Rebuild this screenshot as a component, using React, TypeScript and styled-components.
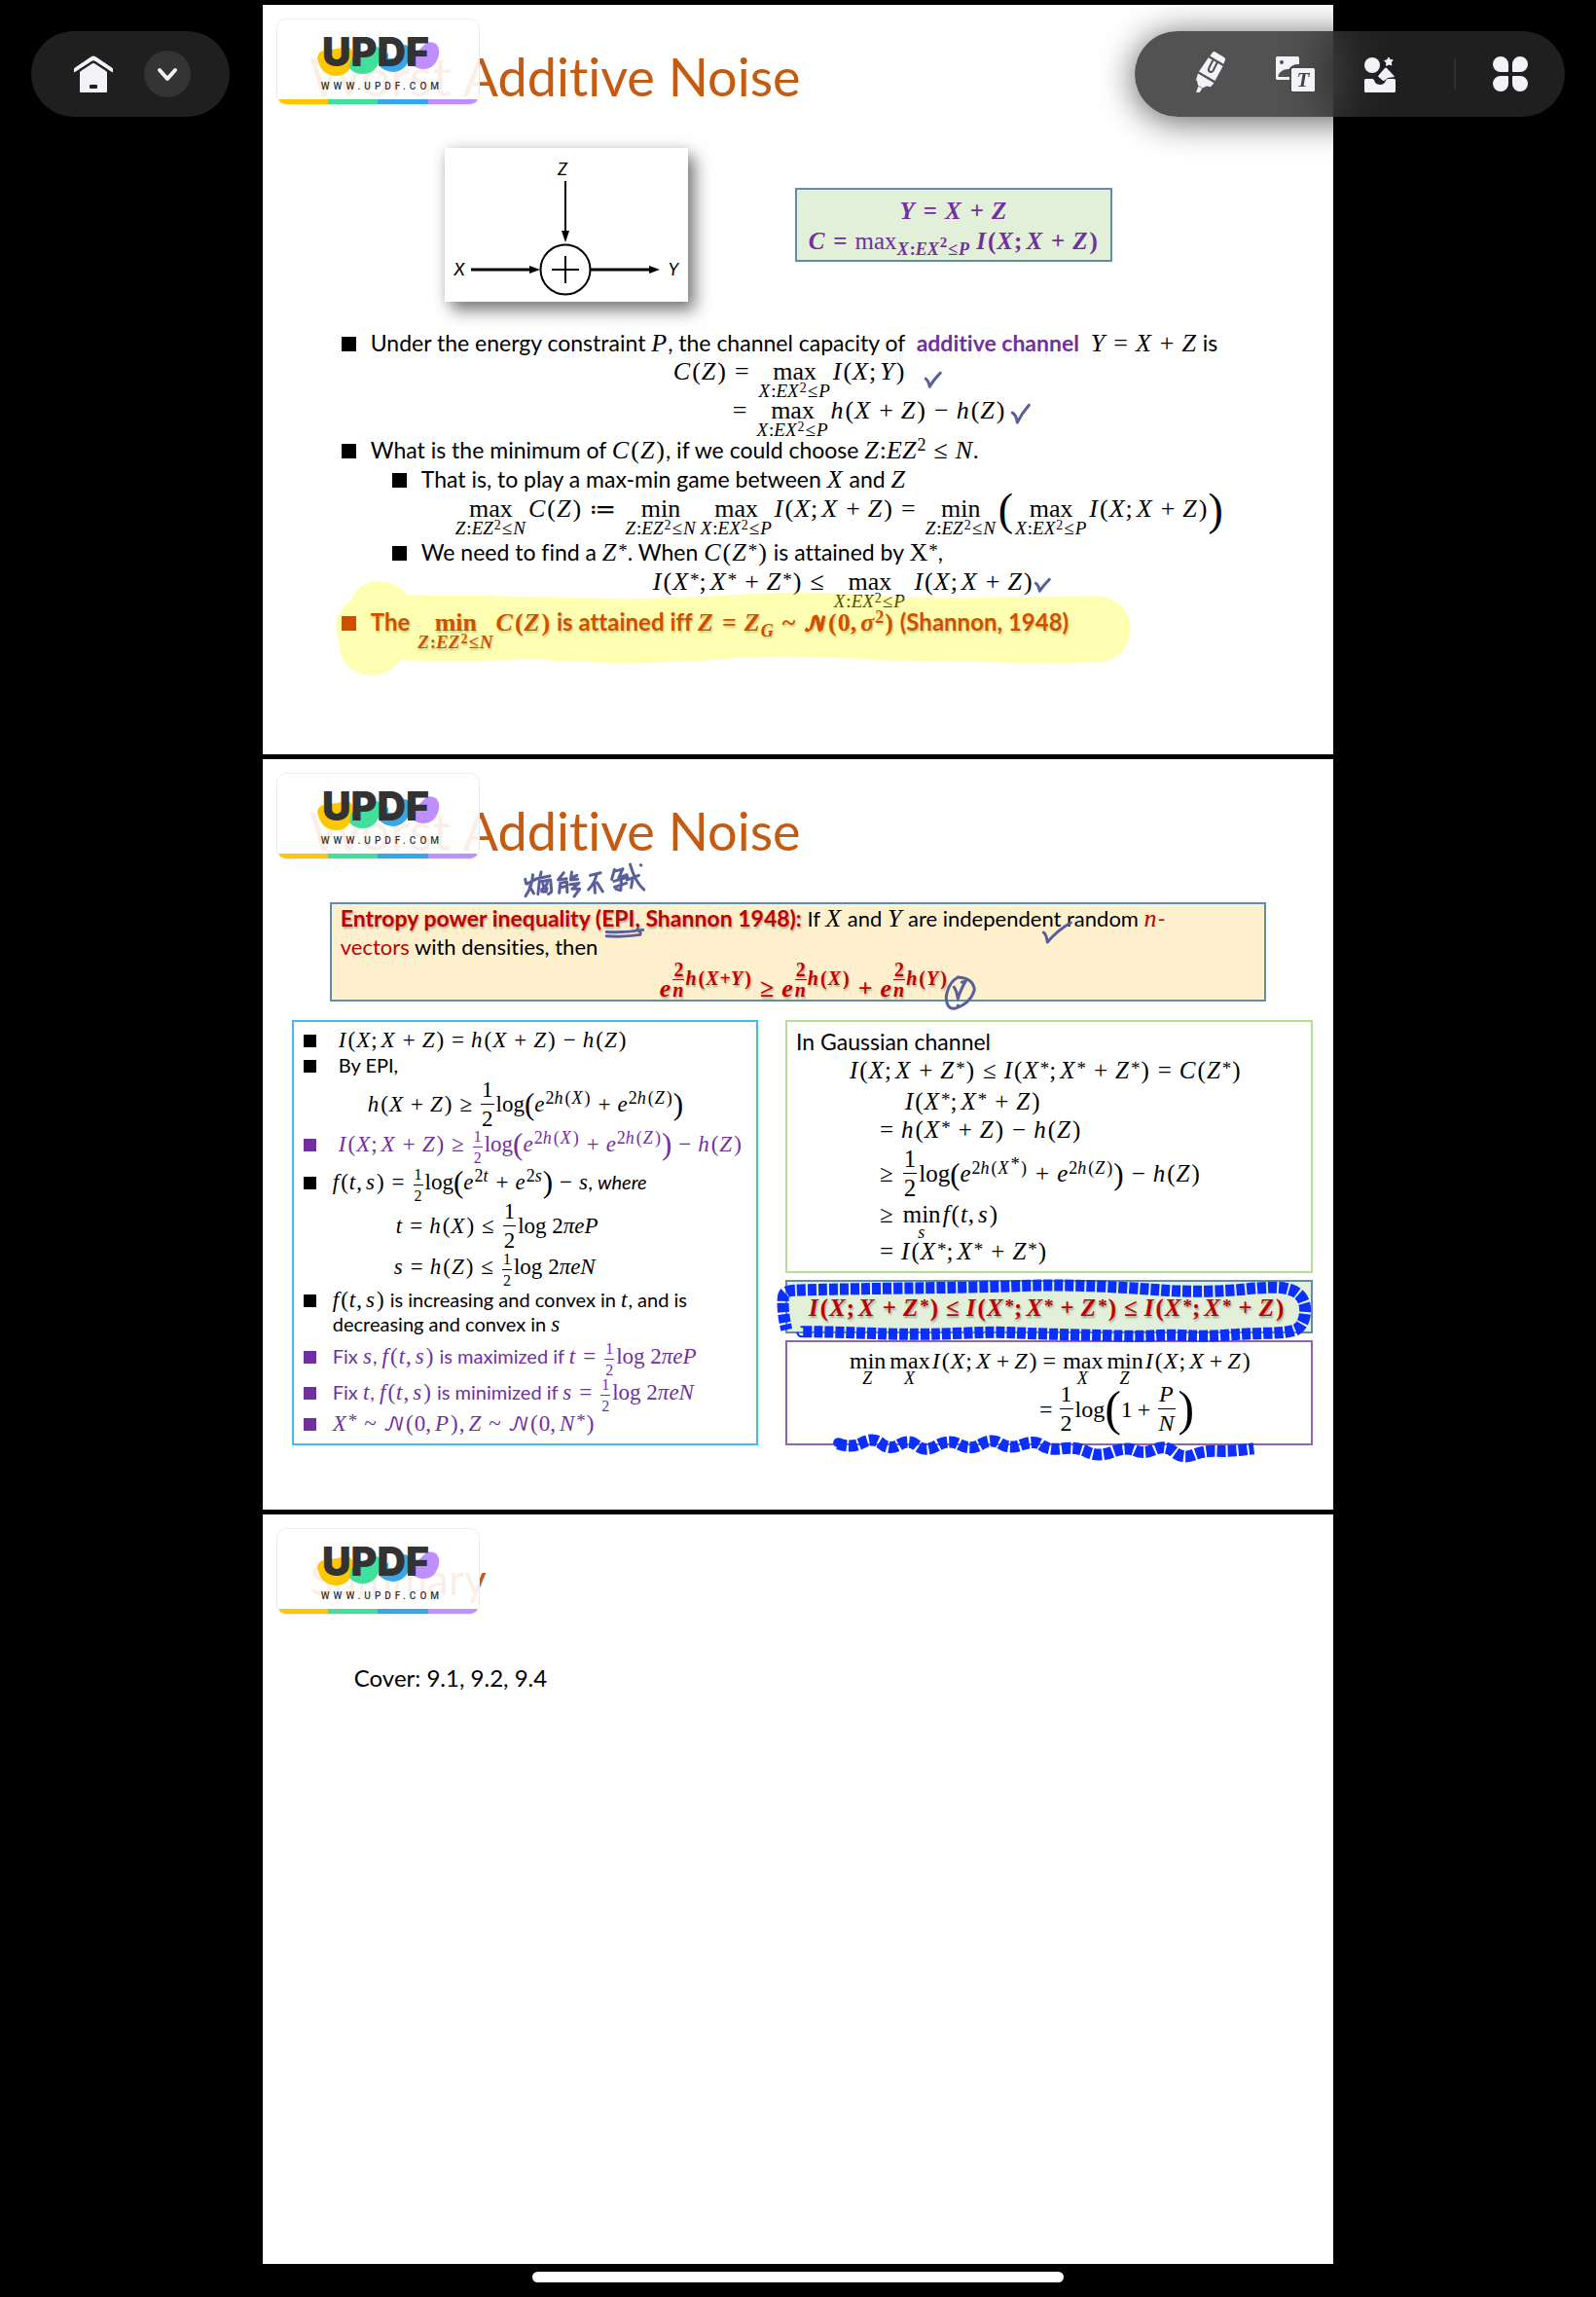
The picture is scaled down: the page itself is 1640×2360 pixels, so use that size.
import React from 'react';
import styled, { createGlobalStyle, css } from 'styled-components';

const INK = '#595f9b';
const PURPLE = '#7030a0';
const RED = '#c00000';
const ICON = '#f2f2f8';

const GlobalStyle = createGlobalStyle`
  *, *::before, *::after { box-sizing: border-box; }
  body {
    margin: 0;
    background: #000;
    color: #000;
    font-family: Lato, 'Open Sans', sans-serif;
    font-variant-ligatures: none;
  }
`;

const Viewer = styled.div`
  position: relative;
  min-height: 100vh;
  background: #000;
  display: flex;
  flex-direction: column;
  align-items: center;
  padding-top: 5px;
`;

const Pages = styled.main`
  width: 67.1%;
  display: flex;
  flex-direction: column;
  gap: 5px;
`;

const Slide = styled.section`
  position: relative;
  background: #fff;
  aspect-ratio: 10 / 7;
  overflow: hidden;
`;

const Title = styled.h1<{ $small?: boolean }>`
  margin: 0;
  padding: ${(p) => (p.$small ? '34px 0 7px 49px' : '42px 0 0 48px')};
  font-size: ${(p) => (p.$small ? 44 : 54)}px;
  line-height: 64px;
  font-weight: 400;
  color: #c55a11;
  white-space: nowrap;
`;

const HomeBar = styled.div`
  width: 33.3%;
  height: 11px;
  border-radius: 6px;
  background: #fff;
  margin-top: 8px;
`;

/* ---------- floating toolbars ---------- */

const TopBar = styled.header`
  position: absolute;
  top: 0;
  left: 0;
  right: 0;
  padding: 32px;
  display: flex;
  justify-content: space-between;
  pointer-events: none;
`;

const Pill = styled.nav<{ $pad: string; $gap: number }>`
  display: flex;
  align-items: center;
  gap: ${(p) => p.$gap}px;
  height: 88px;
  padding: ${(p) => p.$pad};
  border-radius: 44px;
  background: rgba(39, 39, 39, 0.8);
  backdrop-filter: blur(30px);
  box-shadow: 0 4px 36px rgba(0, 0, 0, 0.65);
  pointer-events: auto;
`;

const IconButton = styled.button<{ $round?: boolean }>`
  width: 48px;
  height: 48px;
  padding: 0;
  border: 0;
  border-radius: 24px;
  background: ${(p) => (p.$round ? '#343434' : 'transparent')};
  color: ${ICON};
  svg { display: block; width: 48px; height: 48px; }
`;

const Divider = styled.span`
  width: 2px;
  height: 32px;
  margin: 0 -7px 0 13px;
  background: #2f2f2f;
`;

const HomeIcon = () => (
  <svg viewBox="0 0 48 48" fill="currentColor" aria-hidden="true">
    <path d="M22 6.1q2-1.4 4 0l17 11.3q1 .7 1 1.8v2.4q0 1.2-1 .5L26 10.9q-2-1.3-4 0L5 22.1q-1 .7-1-.5v-2.4q0-1.1 1-1.8z" />
    <path fillRule="evenodd" d="M22.8 13.2q1.2-.8 2.4 0L37 21q1 .7 1 1.8V42q0 1-1 1H11q-1 0-1-1V22.8q0-1.1 1-1.8zM21 35q-1 0-1 1v2q0 1 1 1h6q1 0 1-1v-2q0-1-1-1z" />
  </svg>
);

const ChevronIcon = () => (
  <svg viewBox="0 0 48 48" fill="none" stroke="currentColor" strokeWidth="4" strokeLinecap="round" strokeLinejoin="round" aria-hidden="true">
    <path d="M16 20l8 9 8-9" />
  </svg>
);

const MarkerIcon = () => (
  <svg viewBox="0 0 48 48" fill="currentColor" aria-hidden="true">
    <path d="M26.5 1.3q.8-.8 2 0l9.5 5.7q1.6 1 .9 2.8l-1.5 4L23.300 5.400z" />
    <path d="M21.700 7.200l14.900 8.900L28.500 31 12 21.400z" />
    <path d="M26 10.500l-4 8q-.6 2.400 1.300 3.300 2 .8 3.200-1l4-8" fill="none" stroke="#505050" strokeWidth="2" strokeLinecap="round" />
    <path d="M11 23.500l16.500 9.700-3.500 4-4-.7-4.500 2-4.500-3-.8-4-1.200-1.500z" />
    <path d="M11.500 36.500l3.800 2.400-2.800 4-3.500-.2z" />
  </svg>
);

const ImageTextIcon = () => (
  <svg viewBox="0 0 48 48" fill="currentColor" aria-hidden="true">
    <path d="M5.500 6h21q1.500 0 1.500 1.500V14q-7-.6-10.500 5-8-.6-11 6.500-.6 1.500.8 1.500H18v3H5.500Q4 30 4 28.500v-21Q4 6 5.500 6z" />
    <circle cx="10" cy="12" r="2" fill="#505050" />
    <rect x="18.500" y="16.500" width="27" height="27" rx="2" fill="#474747" />
    <rect x="20" y="18" width="24" height="24" rx="1.500" />
    <text x="32" y="37" fontSize="21" fontWeight="700" fontStyle="italic" fontFamily="'Liberation Serif', serif" textAnchor="middle" fill="#454545">T</text>
  </svg>
);

const ShapesIcon = () => (
  <svg viewBox="0 0 48 48" fill="currentColor" aria-hidden="true">
    <circle cx="16" cy="15" r="8" />
    <path d="M33 7l1.300 2.500 2.900.300-1.900 2.300.6 2.900-2.700-1-2.600 1.400.2-3-2.200-2 2.900-.7z" strokeWidth="1" stroke="currentColor" strokeLinejoin="round" />
    <path d="M29 18q1-1.200 2 0l7.500 8q.8 1.200-.5 1.200-5 0-7 1.500l-2.500 2q-1 .8-1.600 0L22.500 27q-.7-.8 0-1.500z" />
    <path d="M9.500 29H16q1.600 0 2 1.400 1.500 4.600 6.200 4.600 4 0 6-4.600.6-1.400 2-1.400h6.300q1.500 0 1.500 1.500v11q0 1.500-1.500 1.500h-29Q8 43 8 41.500v-11Q8 29 9.500 29z" />
  </svg>
);

const CloverIcon = () => (
  <svg viewBox="0 0 48 48" fill="currentColor" aria-hidden="true">
    <path d="M14 6a8 8 0 0 1 8 8v7q0 1-1 1h-7a8 8 0 0 1 0-16zM34 6a8 8 0 0 1 0 16h-7q-1 0-1-1v-7a8 8 0 0 1 8-8zM14 26h7q1 0 1 1v7a8 8 0 1 1-8-8zM27 26h7a8 8 0 1 1-8 8v-7q0-1 1-1z" />
  </svg>
);

/* ---------- watermark card ---------- */

const Mark = styled.aside`
  position: absolute;
  top: 14px;
  left: 14px;
  width: 209px;
  height: 89px;
  display: flex;
  flex-direction: column;
  border: 1px solid #ececec;
  border-radius: 10px;
  background: rgba(255, 255, 255, 0.9);
  overflow: hidden;
  svg { display: block; width: 207px; height: 62px; }
`;

const MarkUrl = styled.span`
  flex: 1;
  padding-left: 45px;
  font: 500 10px/14px Roboto, sans-serif;
  letter-spacing: 4px;
  color: #333;
`;

const MarkBar = styled.span`
  height: 5px;
  background: linear-gradient(90deg, #ffc700 25%, #40e09c 25% 50%, #38a6ea 50% 75%, #bf8fff 75%);
`;

const Watermark = () => (
  <Mark>
    <svg viewBox="0 0 207 62">
      <path d="M41 39q2-8 9-7l22-4q7 2 6 12-3 18-18 18-16-1-19-19z" fill="#ffc700" />
      <path d="M76 40l22-12q9-2 8 9-3 19-18 19-9 0-14-6z" fill="#40e09c" />
      <path d="M105 40l23-14q9-1 9 8-2 18-17 20-10 0-16-7z" fill="#38a6ea" />
      <path d="M137 40l14-14q5-5 12-1 4 4 3 11-3 14-15 15-8 0-14-5z" fill="#bf8fff" />
      <path d="M83 28h8q5 4 0 9h-8zM114 27h6q8 5 0 13h-6z" fill="#fff" />
      <text x="101" y="48" textAnchor="middle" fontFamily="Inter, sans-serif" fontWeight="900" fontSize="41" fill="#333">UPDF</text>
    </svg>
    <MarkUrl>WWW.UPDF.COM</MarkUrl>
    <MarkBar />
  </Mark>
);

/* ---------- mathematics ---------- */

const Op = styled.span`margin: 0 var(--op);`;
const Punct = styled.span`margin-right: 4px;`;
const Paren = styled.span`margin: 0 1px;`;
const Plain = styled.span`font-weight: 400;`;
const Star = styled.span`
  font-size: 19px;
  line-height: 0;
  vertical-align: 4px;
  margin-left: 1px;
`;
const Big = styled.span<{ $size: number }>`
  font-size: ${(p) => p.$size}px;
  line-height: 0;
  font-weight: 400;
  vertical-align: ${(p) => (p.$size > 40 ? -8 : -3)}px;
`;

const Formula = styled.span<{ $bold?: boolean }>`
  font-family: 'Liberation Serif', 'DejaVu Math TeX Gyre', serif;
  font-size: var(--math);
  font-weight: ${(p) => (p.$bold ? 700 : 400)};
  i { margin-right: 1px; }
`;

const Script = styled.span`
  font-family: 'DejaVu Math TeX Gyre', 'DejaVu Sans', serif;
  font-size: 20px;
  line-height: 0;
  font-weight: 400;
`;

const Sup = styled.span`
  font-size: 18px;
  line-height: 0;
  vertical-align: 8px;
  ${Op} { margin: 0; }
`;

const Sub = styled.span`
  font-size: 18px;
  line-height: 0;
  vertical-align: -6px;
  ${Op} { margin: 0 1px; }
  ${Sup} { font-size: 15px; }
`;

const UnderBox = styled.span<{ $wide?: boolean }>`
  display: inline-flex;
  flex-direction: column;
  align-items: center;
  margin: 0 2px -30px;
  > span:last-child {
    margin-top: ${(p) => (p.$wide ? -2 : -4)}px;
    font-size: ${(p) => (p.$wide ? 19 : 18)}px;
    line-height: 16px;
  }
  > span:last-child ${Op} { margin: 0 1px; }
  ${Sup} { font-size: 14px; vertical-align: 5px; }
`;

const FracBox = styled.span<{ $small?: boolean }>`
  display: inline-flex;
  flex-direction: column;
  align-items: center;
  vertical-align: middle;
  margin: ${(p) => (p.$small ? '-40px 2px' : '-43px 2px -37px')};
  ${(p) => p.$small && css`font-size: 16px;`}
  > span { line-height: ${(p) => (p.$small ? 21 : 29)}px; padding: 0 1px; }
  > span:first-child { border-bottom: 1px solid currentColor; }
`;

const PowerBox = styled.span`
  display: inline-block;
  font-size: 20px;
  line-height: 0;
  vertical-align: 12px;
  ${Op} { margin: 0; }
  ${FracBox} { margin: -31px 0 -29px; }
  ${FracBox} > span { line-height: 20px; }
`;

function parse(text: string): React.ReactNode[] {
  const runs = text.match(/[A-Za-zπσ]+|[0-9]+|\s+|./gu) ?? [];
  return runs.map((run, i) => {
    if (/^[A-Za-zπσ]/.test(run)) return <i key={i}>{run}</i>;
    if (/^[+=−≤≥~≔]$/.test(run)) return <Op key={i}>{run}</Op>;
    if (/^[;,]$/.test(run)) return <Punct key={i}>{run}</Punct>;
    if (/^[()]$/.test(run)) return <Paren key={i}>{run}</Paren>;
    if (run === '*') return <Star key={i}>*</Star>;
    return run;
  });
}

const mathify = (children: React.ReactNode) =>
  React.Children.map(children, (c) => (typeof c === 'string' ? parse(c) : c));

const M = ({ children, bold }: { children: React.ReactNode; bold?: boolean }) => (
  <Formula $bold={bold}>{mathify(children)}</Formula>
);
const Up = ({ children }: { children: React.ReactNode }) => <Sup>{mathify(children)}</Sup>;
const Under = ({ fn, children, wide }: { fn: string; children: React.ReactNode; wide?: boolean }) => (
  <UnderBox $wide={wide}>
    <span>{fn}</span>
    <span>{mathify(children)}</span>
  </UnderBox>
);
const Frac = ({ n, d, small }: { n: string; d: string; small?: boolean }) => (
  <FracBox $small={small}>
    <span>{parse(n)}</span>
    <span>{parse(d)}</span>
  </FracBox>
);
const LimX = ({ fn = 'max' }: { fn?: string }) => (
  <Under fn={fn} wide>{'X:EX'}<Up>2</Up>{'≤P'}</Under>
);
const LimZ = ({ fn }: { fn: string }) => (
  <Under fn={fn} wide>{'Z:EZ'}<Up>2</Up>{'≤N'}</Under>
);
const LogSum = ({ a, b }: { a: string; b: string }) => (
  <>
    {'log'}
    <Big $size={31}>(</Big>
    {parse('e')}
    <Up>{a}</Up>
    {parse('+e')}
    <Up>{b}</Up>
    <Big $size={31}>)</Big>
  </>
);
const EpiPower = ({ arg }: { arg: string }) => (
  <>
    {parse('e')}
    <PowerBox><Frac n="2" d="n" />{parse(arg)}</PowerBox>
  </>
);

/* ---------- slide text ---------- */

const Lines = styled.div<{ $text: number; $math: number; $lh: number; $op?: number }>`
  --math: ${(p) => p.$math}px;
  --op: ${(p) => p.$op ?? 7}px;
  font-size: ${(p) => p.$text}px;
  line-height: ${(p) => p.$lh}px;
`;

const Line = styled.div<{ $h: number; $in?: number; $gap?: number; $color?: string; $strong?: boolean }>`
  display: flex;
  align-items: baseline;
  gap: ${(p) => p.$gap ?? 0}px;
  height: ${(p) => p.$h}px;
  padding-left: ${(p) => p.$in ?? 0}px;
  white-space: pre;
  color: ${(p) => p.$color ?? 'inherit'};
  ${(p) => p.$strong && css`
    font-size: 24px;
    font-weight: 700;
    text-shadow: 1px 2px 2px rgba(0, 0, 0, 0.3);
  `}
`;

const Dot = styled.span<{ $size: number }>`
  flex: none;
  width: ${(p) => p.$size}px;
  height: ${(p) => p.$size}px;
  margin-bottom: 3px;
  background: currentColor;
`;

const Accent = styled.span<{ $c: string }>`color: ${(p) => p.$c};`;
const Strong = styled.strong<{ $c: string; $size?: number; $shadow?: boolean }>`
  color: ${(p) => p.$c};
  font-size: ${(p) => p.$size ?? 24}px;
  font-weight: 700;
  ${(p) => p.$shadow && css`text-shadow: 1px 2px 2px rgba(0, 0, 0, 0.3);`}
`;

const Figures = styled.div`
  display: flex;
  align-items: center;
  gap: 110px;
  margin: 41px 0 28px 187px;
`;

const DiagramCard = styled.figure`
  margin: 0;
  width: 250px;
  height: 158px;
  background: #fff;
  box-shadow: 7px 9px 16px rgba(0, 0, 0, 0.5), 0 0 12px rgba(0, 0, 0, 0.12);
  svg { display: block; width: 100%; height: 100%; }
`;

const CapacityBox = styled.div`
  --math: 25px;
  --op: 8px;
  width: 326px;
  padding: 6px 0 4px;
  border: 2px solid #5f8db0;
  background: #e2efd9;
  color: ${PURPLE};
  text-align: center;
  font: 25px/31px 'Liberation Serif', serif;
  white-space: nowrap;
`;

const Bullets = styled(Lines)`padding-left: 81px;`;

const EpiBox = styled(Lines)`
  margin: 41px 69px 19px;
  padding: 0 9px;
  height: 102px;
  border: 2px solid #5f8db0;
  background: #fff0cd;
`;

const Columns = styled.div`
  display: grid;
  grid-template-columns: 479fr 542fr;
  gap: 28px;
  margin: 0 21px 0 30px;
`;

const Stack = styled.div`
  display: flex;
  flex-direction: column;
  gap: 7px;
`;

const Panel = styled(Lines)<{ $border: string; $fill?: string; $pad: string }>`
  border: 2px solid ${(p) => p.$border};
  background: ${(p) => p.$fill ?? 'transparent'};
  padding: ${(p) => p.$pad};
`;

const Cover = styled.p`
  margin: 49px 0 0 94px;
  font-size: 24px;
  line-height: 28px;
`;

const Ink = styled.svg`
  position: absolute;
  inset: 0;
  width: 100%;
  height: 100%;
  pointer-events: none;
`;

/* Runs one soft curve through the midpoints of a pen stroke's points. */
function smooth(pts: number[][]): string {
  let d = `M${pts[0][0]} ${pts[0][1]}`;
  for (let i = 1; i < pts.length - 1; i++) {
    const mx = (pts[i][0] + pts[i + 1][0]) / 2;
    const my = (pts[i][1] + pts[i + 1][1]) / 2;
    d += `Q${pts[i][0]} ${pts[i][1]} ${mx} ${my}`;
  }
  const last = pts[pts.length - 1];
  return `${d}L${last[0]} ${last[1]}`;
}

const LOOP = smooth([
  [555, 588], [582, 588], [629, 590], [684, 591], [753, 588], [789, 590], [833, 591], [902, 593], [931, 591],
  [967, 593], [1011, 590], [1056, 589], [1068, 582], [1072, 563], [1065, 548], [1047, 542], [1022, 543], [993, 546],
  [949, 547], [905, 544], [858, 541], [804, 540], [745, 542], [684, 543], [611, 544], [556, 545], [536, 546],
  [534, 555], [535, 572], [538, 586],
]);

const WAVE = smooth([
  [591, 703], [605, 708], [627, 696], [644, 710], [664, 698], [680, 712], [705, 698], [727, 710], [749, 697],
  [767, 709], [793, 699], [807, 710], [836, 706], [858, 717], [887, 706], [905, 714], [927, 704], [945, 719],
  [967, 710], [993, 711], [1018, 708],
]);

const Diagram = () => (
  <svg viewBox="0 0 250 158" fill="none" stroke="#000" strokeWidth="2">
    <path d="M124 34v54" />
    <path d="M27 125h62M150 125h60" strokeWidth="3" />
    <circle cx="124" cy="125" r="25.500" />
    <path d="M110 125h28M124 111v28" />
    <path d="M120 85h8l-4 12zM87 121l11 4-11 4zM210 121l11 4-11 4z" fill="#000" stroke="none" />
    <g fill="#000" stroke="none" fontFamily="Lato, sans-serif" fontStyle="italic" fontSize="18" textAnchor="middle">
      <text x="121" y="28">Z</text>
      <text x="15" y="131">X</text>
      <text x="235" y="131">Y</text>
    </g>
  </svg>
);

const SlideOne = () => (
  <Slide>
    <Title>Worst Additive Noise</Title>
    <Figures>
      <DiagramCard><Diagram /></DiagramCard>
      <CapacityBox>
        <div><M bold>Y=X+Z</M></div>
        <div>
          <M bold>
            {'C='}
            <Plain>max</Plain>
            <Sub>{parse('X:EX')}<Up>2</Up>{parse('≤P')}</Sub>
            {' I(X;X+Z)'}
          </M>
        </div>
      </CapacityBox>
    </Figures>
    <Bullets $text={23} $math={26} $lh={28} $op={8}>
      <Line $h={30} $gap={15}>
        <Dot $size={15} />
        <span>Under the energy constraint <M>P</M>, the channel capacity of  <Strong $c={PURPLE} $size={23}>additive channel</Strong>  <M>Y=X+Z</M> is</span>
      </Line>
      <Line $h={40} $in={341}><M>{'C(Z)='}<LimX />{'I(X;Y)'}</M></Line>
      <Line $h={40} $in={394}><M>{'='}<LimX />{'h(X+Z)−h(Z)'}</M></Line>
      <Line $h={30} $gap={15}>
        <Dot $size={15} />
        <span>What is the minimum of <M>C(Z)</M>, if we could choose <M>{'Z:EZ'}<Up>2</Up>{'≤N'}</M>.</span>
      </Line>
      <Line $h={31} $in={52} $gap={15}>
        <Dot $size={15} />
        <span>That is, to play a max-min game between <M>X</M> and <M>Z</M></span>
      </Line>
      <Line $h={44} $in={115}>
        <M>
          <LimZ fn="max" />{'C(Z)≔'}<LimZ fn="min" /><LimX />{'I(X;X+Z)='}<LimZ fn="min" />
          <Big $size={46}>(</Big><LimX />{'I(X;X+Z)'}<Big $size={46}>)</Big>
        </M>
      </Line>
      <Line $h={31} $in={52} $gap={15}>
        <Dot $size={15} />
        <span>We need to find a <M>Z*</M>. When <M>C(Z*)</M> is attained by <M><span>X</span>*</M>,</span>
      </Line>
      <Line $h={41} $in={320}><M>{'I(X*;X*+Z*)≤'}<LimX />{' I(X;X+Z)'}</M></Line>
      <Line $h={40} $gap={15} $color={RED} $strong>
        <Dot $size={15} />
        <span>
          The <M bold><LimZ fn="min" />{'C(Z)'}</M> is attained iff <M bold>{'Z=Z'}<Sub>{parse('G')}</Sub>{'~'}<Script>𝓝</Script>{'(0,σ'}<Up>2</Up>{')'}</M> (Shannon, 1948)
        </span>
      </Line>
    </Bullets>
    <Ink viewBox="0 0 1100 770">
      <path
        d="M148 606L240 607Q320 609 370 610 430 609 480 606 540 602 590 604 650 609 720 609L857 607Q891 611 891 641 890 670 860 675 800 677 740 675L640 673Q560 668 500 670 420 676 370 676 320 675 280 672 200 675 141 673 130 688 112 689 92 688 83 673 78 664 78 652 74 640 76 632 80 618 90 612 98 592 120 592 140 593 148 606z"
        fill="#ff0" fillOpacity="0.3"
      />
      <g fill="none" stroke={INK} strokeWidth="3" strokeLinecap="round" strokeLinejoin="round">
        <path d="M681 384q3 2 4 8 5-8 11-14" />
        <path d="M770 419q4 2 5 10 5-10 12-18" />
        <path d="M794 594q3 2 4 8 5-7 10-12" />
      </g>
    </Ink>
    <Watermark />
  </Slide>
);

const SlideTwo = () => (
  <Slide>
    <Title>Worst Additive Noise</Title>
    <EpiBox $text={22} $math={26} $lh={28} $op={8}>
      <Line $h={30}>
        <span>
          <Strong $c={RED} $size={23} $shadow>Entropy power inequality (EPI, Shannon 1948):</Strong> If <M>X</M> and <M>Y</M> are independent random <Accent $c={RED}><M>n</M>-</Accent>
        </span>
      </Line>
      <Line $h={43}><span><Accent $c={RED}>vectors</Accent> with densities, then</span></Line>
      <Line $h={24} $in={328} $color={RED} $strong>
        <M bold><EpiPower arg="h(X+Y)" />{'≥'}<EpiPower arg="h(X)" />{'+'}<EpiPower arg="h(Y)" /></M>
      </Line>
    </EpiBox>
    <Columns>
      <Panel $text={20} $math={23} $lh={24} $border="#3dbdf0" $pad="7px 0 0 10px">
        <Line $h={25} $gap={23}><Dot $size={13} /><M>I(X;X+Z)=h(X+Z)−h(Z)</M></Line>
        <Line $h={41} $gap={23}><Dot $size={13} /><span>By EPI,</span></Line>
        <Line $h={41} $in={66}><M>{'h(X+Z)≥'}<Frac n="1" d="2" /><LogSum a="2h(X)" b="2h(Z)" /></M></Line>
        <Line $h={38} $gap={23} $color={PURPLE}>
          <Dot $size={13} />
          <M>{'I(X;X+Z)≥'}<Frac small n="1" d="2" /><LogSum a="2h(X)" b="2h(Z)" />{'−h(Z)'}</M>
        </Line>
        <Line $h={46} $gap={17}>
          <Dot $size={13} />
          <span><M>{'f(t,s)='}<Frac small n="1" d="2" /><LogSum a="2t" b="2s" />{'−s'}</M><em>, where</em></span>
        </Line>
        <Line $h={42} $in={95}><M>{'t=h(X)≤'}<Frac n="1" d="2" /><span>log </span>{'2πeP'}</M></Line>
        <Line $h={33} $in={93}><M>{'s=h(Z)≤'}<Frac small n="1" d="2" /><span>log </span>{'2πeN'}</M></Line>
        <Line $h={58} $gap={17}>
          <Dot $size={13} />
          <span><M>f(t,s)</M> is increasing and convex in <M>t</M>, and is{'\n'}decreasing and convex in <M>s</M></span>
        </Line>
        <Line $h={37} $gap={17} $color={PURPLE}>
          <Dot $size={13} />
          <span>Fix <M>s</M>, <M>f(t,s)</M> is maximized if <M>{'t='}<Frac small n="1" d="2" /><span>log </span>{'2πeP'}</M></span>
        </Line>
        <Line $h={33} $gap={17} $color={PURPLE}>
          <Dot $size={13} />
          <span>Fix <M>t</M>, <M>f(t,s)</M> is minimized if <M>{'s='}<Frac small n="1" d="2" /><span>log </span>{'2πeN'}</M></span>
        </Line>
        <Line $h={24} $gap={17} $color={PURPLE}>
          <Dot $size={13} />
          <M>{'X*~'}<Script>𝒩</Script>{'(0,P),Z~'}<Script>𝒩</Script>{'(0,N*)'}</M>
        </Line>
      </Panel>
      <Stack>
        <Panel $text={23} $math={25} $lh={28} $op={8} $border="#b4de90" $pad="6px 0 10px 9px">
          <Line $h={30}>In Gaussian channel</Line>
          <Line $h={32} $in={55}><M>I(X;X+Z*)≤I(X*;X*+Z*)=C(Z*)</M></Line>
          <Line $h={29} $in={112}><M>I(X*;X*+Z)</M></Line>
          <Line $h={45} $in={78}><M>=h(X*+Z)−h(Z)</M></Line>
          <Line $h={42} $in={78}><M>{'≥'}<Frac n="1" d="2" /><LogSum a="2h(X*)" b="2h(Z)" />{'−h(Z)'}</M></Line>
          <Line $h={38} $in={78}><M>{'≥'}<Under fn="min">s</Under>{'f(t,s)'}</M></Line>
          <Line $h={24} $in={78}><M>=I(X*;X*+Z*)</M></Line>
        </Panel>
        <Panel $text={21} $math={25} $lh={28} $border="#5f8db0" $fill="#e2efd9" $pad="13px 0 10px 22px">
          <Line $h={28} $color={RED} $strong><M bold>I(X;X+Z*)≤I(X*;X*+Z*)≤I(X*;X*+Z)</M></Line>
        </Panel>
        <Panel $text={21} $math={24} $lh={28} $op={5} $border="#9560b8" $pad="5px 0 21px 62px">
          <Line $h={50}>
            <M><Under fn="min">Z</Under><Under fn="max">X</Under>{'I(X;X+Z)='}<Under fn="max">X</Under><Under fn="min">Z</Under>{'I(X;X+Z)'}</M>
          </Line>
          <Line $h={28} $in={192}>
            <M>{'='}<Frac n="1" d="2" /><span>log</span><Big $size={50}>(</Big>{'1+'}<Frac n="P" d="N" /><Big $size={50}>)</Big></M>
          </Line>
        </Panel>
      </Stack>
    </Columns>
    <Ink viewBox="0 0 1100 770" fill="none" strokeLinecap="round" strokeLinejoin="round">
      <g stroke={INK} strokeWidth="3">
        <g transform="translate(0 -10) scale(.357 .3333)">
          <path vectorEffect="non-scaling-stroke" d="M755 400l3 14M777 386q-2 38-21 66M768 422l12 22M760 414l26-14M801 378l-3 14M786 399l40-9M796 406l-4 40M796 408l32-6 3 36-9 8M806 414l3 12M819 412l-8 14M803 430l15-2-3 11-12-1z" />
          <path vectorEffect="non-scaling-stroke" d="M866 380l-16 22 24-4M856 412l-3 30M856 412l19-4 1 32M857 425l18-4M889 378l-3 24 20-2M904 388l-16 8M884 416l26-4-20 18h22l-16 23" />
          <path vectorEffect="non-scaling-stroke" d="M942 388l30-8M961 384q-6 28-24 48M954 406l2 36M962 410l16 28" />
          <path vectorEffect="non-scaling-stroke" d="M1012 370l-8 30M1010 376l22-6M1036 368l-12 28 24-10M1010 406l40-12M1012 424l34-12M1032 398l-2 36-14-4M1057 354q14 54 40 78M1048 402l34-14M1064 400l-4 26M1087 356l2 1" />
          <path vectorEffect="non-scaling-stroke" d="M989 562q50 4 105-6M1078 556q12 6 8 15-50 8-97 4" />
        </g>
        <path d="M802 178q3 2 4 10 10-12 24-20" />
        <path d="M714 224q16 1 17 13-4 14-20 19-9 1-9-12 2-14 12-20M710 234q3 4 4 12 3-10 8-18l-4 1M714 253l2 1" />
      </g>
      <g stroke="#0a2fff" strokeWidth="12" strokeLinecap="butt" strokeDasharray="9 2">
        <path d={LOOP} />
        <path d={WAVE} />
      </g>
      <circle cx="554" cy="588" r="5" stroke="#0a2fff" strokeWidth="2" strokeDasharray="14 8" />
      <circle cx="591" cy="702" r="5" fill="#0a2fff" />
    </Ink>
    <Watermark />
  </Slide>
);

const SlideThree = () => (
  <Slide>
    <Title $small>Summary</Title>
    <Cover>Cover: 9.1, 9.2, 9.4</Cover>
    <Watermark />
  </Slide>
);

export default function App() {
  return (
    <Viewer>
      <GlobalStyle />
      <Pages>
        <SlideOne />
        <SlideTwo />
        <SlideThree />
      </Pages>
      <HomeBar />
      <TopBar>
        <Pill $pad="0 40px" $gap={28} aria-label="Navigation">
          <IconButton aria-label="Home"><HomeIcon /></IconButton>
          <IconButton $round aria-label="More pages"><ChevronIcon /></IconButton>
        </Pill>
        <Pill $pad="0 32px 0 54px" $gap={39} aria-label="Tools">
          <IconButton aria-label="Markup"><MarkerIcon /></IconButton>
          <IconButton aria-label="Edit text and images"><ImageTextIcon /></IconButton>
          <IconButton aria-label="Stickers"><ShapesIcon /></IconButton>
          <Divider />
          <IconButton aria-label="All tools"><CloverIcon /></IconButton>
        </Pill>
      </TopBar>
    </Viewer>
  );
}
